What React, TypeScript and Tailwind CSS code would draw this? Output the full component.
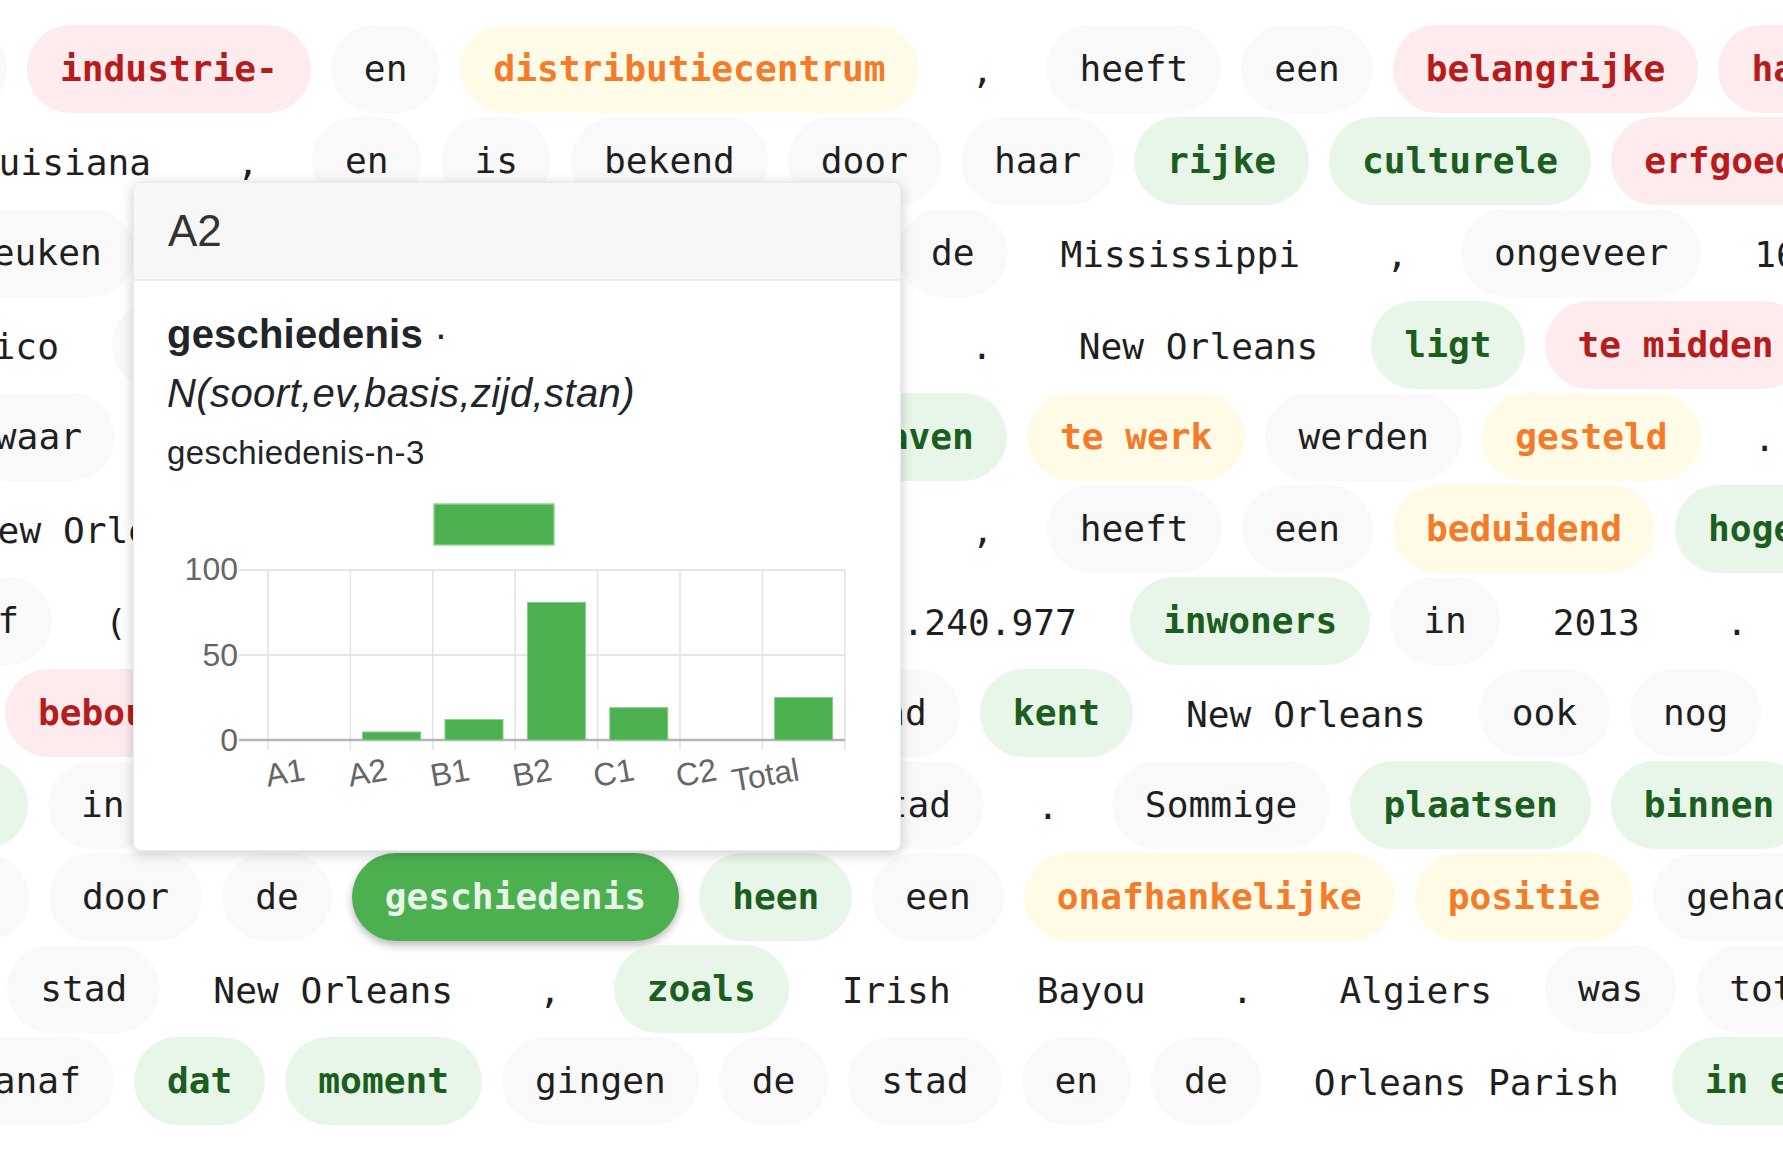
type Kind = 'plain' | 'bare' | 'red' | 'orange' | 'green' | 'active'
type Token = [string, Kind]

interface Row {
  x: number
  tokens: Token[]
  // tokens to the right of the popover, anchored at their own x
  right?: { x: number; tokens: Token[] }
}

const CHAR = 21.8
const PAD = 33
const GAP = 20

const tokenWidth = (t: Token) => t[0].length * CHAR + PAD * 2
const spanWidth = (ts: Token[]) => ts.reduce((s, t) => s + tokenWidth(t), 0) + GAP * (ts.length - 1)

const kindClass: Record<Kind, string> = {
  plain: 'bg-[#f9f9f9] text-[#1f1f1f]',
  bare: 'text-[#1f1f1f] translate-y-[2px]',
  red: 'bg-[#fdebee] text-[#b71c1c] font-bold',
  orange: 'bg-[#fffbe6] text-[#f47b2a] font-bold',
  green: 'bg-[#e8f5e9] text-[#1b5e20] font-bold',
  active: 'bg-[#4caf50] text-[#e8f5e9] font-bold shadow-[0_4px_8px_rgba(0,0,0,0.28)]',
}

const rows: Row[] = [
  {
    x: -124.4,
    tokens: [
      ['een', 'plain'], ['industrie-', 'red'], ['en', 'plain'], ['distributiecentrum', 'orange'],
      [',', 'bare'], ['heeft', 'plain'], ['een', 'plain'], ['belangrijke', 'red'], ['haven', 'red'],
    ],
  },
  {
    x: -78,
    tokens: [
      ['Louisiana', 'bare'], [',', 'bare'], ['en', 'plain'], ['is', 'plain'], ['bekend', 'plain'],
      ['door', 'plain'], ['haar', 'plain'], ['rijke', 'green'], ['culturele', 'green'], ['erfgoed', 'red'],
    ],
  },
  {
    x: -62,
    tokens: [['keuken', 'plain']],
    right: {
      x: 898,
      tokens: [['de', 'plain'], ['Mississippi', 'bare'], [',', 'bare'], ['ongeveer', 'plain'], ['160', 'bare']],
    },
  },
  {
    x: -104.8,
    tokens: [['Mexico', 'bare'], ['Golf', 'plain']],
    right: {
      x: 938,
      tokens: [['.', 'bare'], ['New Orleans', 'bare'], ['ligt', 'green'], ['te midden', 'red']],
    },
  },
  {
    x: -38.2,
    tokens: [['waar', 'plain']],
    right: {
      x: 810.2,
      tokens: [['slaven', 'green'], ['te werk', 'orange'], ['werden', 'plain'], ['gesteld', 'orange'], ['.', 'bare']],
    },
  },
  {
    x: -57.2,
    tokens: [['New Orleans', 'bare']],
    right: {
      x: 939,
      tokens: [[',', 'bare'], ['heeft', 'plain'], ['een', 'plain'], ['beduidend', 'orange'], ['hoger', 'green']],
    },
  },
  {
    x: -57.6,
    tokens: [['of', 'plain'], ['(', 'bare']],
    right: {
      x: 847.8,
      tokens: [['1.240.977', 'bare'], ['inwoners', 'green'], ['in', 'plain'], ['2013', 'bare'], ['.', 'bare']],
    },
  },
  {
    x: 5,
    tokens: [['bebouwd', 'red']],
    right: {
      x: 806.8,
      tokens: [['land', 'plain'], ['kent', 'green'], ['New Orleans', 'bare'], ['ook', 'plain'], ['nog', 'plain']],
    },
  },
  {
    x: -168.8,
    tokens: [['liggen', 'green'], ['in', 'plain']],
    right: {
      x: 831,
      tokens: [['stad', 'plain'], ['.', 'bare'], ['Sommige', 'plain'], ['plaatsen', 'green'], ['binnen', 'green']],
    },
  },
  {
    x: -124.2,
    tokens: [
      ['zich', 'plain'], ['door', 'plain'], ['de', 'plain'], ['geschiedenis', 'active'], ['heen', 'green'],
      ['een', 'plain'], ['onafhankelijke', 'orange'], ['positie', 'orange'], ['gehad', 'plain'],
    ],
  },
  {
    x: 7.2,
    tokens: [
      ['stad', 'plain'], ['New Orleans', 'bare'], [',', 'bare'], ['zoals', 'green'], ['Irish', 'bare'],
      ['Bayou', 'bare'], ['.', 'bare'], ['Algiers', 'bare'], ['was', 'plain'], ['tot', 'plain'],
    ],
  },
  {
    x: -61,
    tokens: [
      ['vanaf', 'plain'], ['dat', 'green'], ['moment', 'green'], ['gingen', 'plain'], ['de', 'plain'],
      ['stad', 'plain'], ['en', 'plain'], ['de', 'plain'], ['Orleans Parish', 'bare'], ['in elkaar', 'green'],
    ],
  },
]

function Word({ token }: { token: Token }) {
  const [text, kind] = token
  return (
    <span
      className={`flex h-[88px] shrink-0 items-center whitespace-pre rounded-full px-[33px] ${kindClass[kind]}`}
    >
      {text}
    </span>
  )
}

function TokenRow({ row }: { row: Row }) {
  const leftEnd = row.x + spanWidth(row.tokens)
  return (
    <div className="flex h-[88px] shrink-0 gap-[20px]" style={{ marginLeft: row.x }}>
      {row.tokens.map((t, i) => (
        <Word key={`l${i}`} token={t} />
      ))}
      {/* covered by the popover */}
      {row.right && (
        <span aria-hidden className="shrink-0" style={{ width: row.right.x - leftEnd - 2 * GAP }} />
      )}
      {row.right?.tokens.map((t, i) => (
        <Word key={`r${i}`} token={t} />
      ))}
    </div>
  )
}

const levels = [
  { label: 'A1', value: 0 },
  { label: 'A2', value: 4.7 },
  { label: 'B1', value: 12 },
  { label: 'B2', value: 81 },
  { label: 'C1', value: 19 },
  { label: 'C2', value: 0 },
  { label: 'Total', value: 25 },
]

function LevelChart() {
  const left = 101
  const step = 82.4
  const zeroY = 240
  const scale = 1.7
  return (
    <svg width="700" height="310" viewBox="0 0 700 310" className="block">
      <rect x="267" y="4" width="120" height="41" fill="#4caf50" stroke="#8fd392" strokeWidth="1.5" />
      {[70, 155].map((y) => (
        <line key={y} x1="72" x2="678" y1={y} y2={y} stroke="#e6e6e6" strokeWidth="2" />
      ))}
      {Array.from({ length: 8 }, (_, i) => (
        <line key={i} x1={left + step * i} x2={left + step * i} y1="70" y2="250" stroke="#e2e2e2" strokeWidth="1.5" />
      ))}
      <line x1="72" x2="678" y1={zeroY} y2={zeroY} stroke="#b5b5b5" strokeWidth="2.5" />
      {[
        ['100', 80],
        ['50', 166],
        ['0', 251],
      ].map(([t, y]) => (
        <text key={t} x="71" y={y} textAnchor="end" fontSize="32" fill="#666" fontFamily="Liberation Sans, Arial, sans-serif">
          {t}
        </text>
      ))}
      {levels.map((l, i) => {
        const cx = left + step * i + step / 2
        const h = l.value * scale
        return (
          <g key={l.label}>
            {h > 0 && (
              <rect x={cx - 29} y={zeroY - h} width="58" height={h} fill="#4caf50" stroke="#86cf89" strokeWidth="1" />
            )}
            <text
              x={cx - 3}
              y="280"
              textAnchor="end"
              fontSize="32"
              fill="#666"
              fontFamily="Liberation Sans, Arial, sans-serif"
              transform={`rotate(-10 ${cx - 3} 280)`}
            >
              {l.label}
            </text>
          </g>
        )
      })}
    </svg>
  )
}

function WordPopover() {
  return (
    <div className="absolute left-[133px] top-[182px] z-10 flex h-[669px] w-[768px] flex-col overflow-hidden rounded-[8px] border border-black/[0.08] bg-white font-['Liberation_Sans',Arial,sans-serif] text-[#212529] shadow-[0_3px_14px_rgba(0,0,0,0.2)]">
      <div className="flex h-[98px] shrink-0 items-center border-b-2 border-[#ebebeb] bg-[#f7f7f7] px-[34px] text-[44px] leading-[44px] text-[#333]">
        A2
      </div>
      <div className="flex flex-col px-[33px] pt-[29px]">
        <div className="text-[40px] leading-[48px] font-bold tracking-[0.2px]">
          geschiedenis <span className="font-normal">·</span>
        </div>
        <div className="mt-[11px] text-[40px] leading-[48px] italic tracking-[0.4px]">N(soort,ev,basis,zijd,stan)</div>
        <div className="mt-[16px] text-[33px] leading-[40px] tracking-[0.4px]">geschiedenis-n-3</div>
        <div className="mt-[27px]">
          <LevelChart />
        </div>
      </div>
    </div>
  )
}

export default function App() {
  return (
    <div className="relative h-[1176px] w-[1783px] overflow-hidden bg-white">
      <div className="flex flex-col gap-[4px] pt-[25px] font-['DejaVu_Sans_Mono',monospace] text-[36.2px] leading-none">
        {rows.map((r, i) => (
          <TokenRow key={i} row={r} />
        ))}
      </div>
      <WordPopover />
    </div>
  )
}
